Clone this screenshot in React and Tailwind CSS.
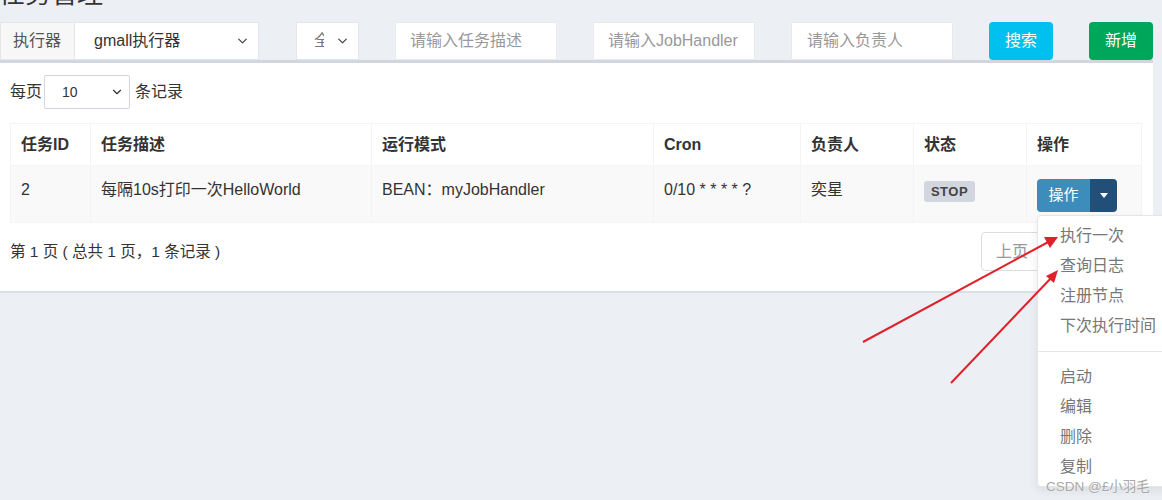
import React from "react";
import { ChevronDown } from "lucide-react";

const FONT = { fontFamily: '"Liberation Sans", "Noto Sans CJK SC", sans-serif' };

function Select({ width, children }) {
  return (
    <div className={`relative flex items-center h-full bg-white border border-[#e3e6ea] ${width}`}>
      {children}
      <ChevronDown className="absolute right-[8px] top-1/2 -translate-y-1/2 text-[#444]" size={15} strokeWidth={2} />
    </div>
  );
}

const cols = [
  { t: "任务ID", w: "w-[80px]" },
  { t: "任务描述", w: "w-[281px]" },
  { t: "运行模式", w: "w-[282px]" },
  { t: "Cron", w: "w-[147px]" },
  { t: "负责人", w: "w-[113px]" },
  { t: "状态", w: "w-[113px]" },
  { t: "操作", w: "w-[115px]" },
];

export default function App() {
  return (
    <div className="relative w-[1162px] h-[500px] overflow-hidden bg-[#ecf0f5] text-[#333]" style={FONT}>
      <h1 className="text-[26px] leading-[26px] -mt-[19px] -ml-[1px] text-[#333]">任务管理</h1>

      {/* filter row */}
      <div className="mt-[15px] flex h-[38px] gap-9 text-[16px]">
        <div className="flex h-full w-[260px]">
          <div className="flex items-center h-full w-[75px] bg-[#f7f7f7] border border-[#e3e6ea] pl-[12px] text-[#555]">执行器</div>
          <Select width="w-[185px] -ml-px">
            <span className="pl-[19px]">gmall执行器</span>
          </Select>
        </div>
        <Select width="w-[63px]">
          <span className="ml-[17px] w-[10px] overflow-hidden whitespace-nowrap text-[#777]">全部</span>
        </Select>
        <div className="flex items-center w-[162px] h-full bg-white border border-[#e8eaed] pl-[14px] text-[#999]">请输入任务描述</div>
        <div className="flex items-center w-[162px] h-full bg-white border border-[#e8eaed] pl-[14px] text-[#999]">请输入JobHandler</div>
        <div className="flex items-center w-[162px] h-full bg-white border border-[#e8eaed] pl-[15px] text-[#999]">请输入负责人</div>
        <div className="flex items-center justify-center w-[64px] h-full rounded-[4px] bg-[#00c0ef] text-white">搜索</div>
        <div className="flex items-center justify-center w-[64px] h-full rounded-[4px] bg-[#00a65a] text-white">新增</div>
      </div>

      {/* box */}
      <div className="w-[1153px] bg-white border-t-[3px] border-[#d2d6de] shadow-[0_2px_0_#dadfe3] px-[10px] pt-[12px] pb-[20px] text-[16px]">
        <div className="flex items-center h-[34px]">
          <span>每页</span>
          <div className="relative flex items-center w-[86px] h-full ml-[2px] border border-[#d2d6de] rounded-[2px] bg-white">
            <span className="pl-[17px] text-[14px]">10</span>
            <ChevronDown className="absolute right-[5px] top-1/2 -translate-y-1/2 text-[#333]" size={14} strokeWidth={2} />
          </div>
          <span className="ml-[5px]">条记录</span>
        </div>

        <table className="mt-[14px] w-[1131px] table-fixed border-collapse">
          <thead>
            <tr className="h-[42px] bg-white">
              {cols.map((c) => (
                <th key={c.t} className={`${c.w} border border-[#f4f4f4] px-[10px] text-left font-bold align-middle`}>{c.t}</th>
              ))}
            </tr>
          </thead>
          <tbody>
            <tr className="h-[57px] bg-[#f9f9f9] align-top">
              <td className="border border-[#f4f4f4] px-[10px] pt-[12px] leading-[24px]">2</td>
              <td className="border border-[#f4f4f4] px-[10px] pt-[12px] leading-[24px]">每隔10s打印一次HelloWorld</td>
              <td className="border border-[#f4f4f4] px-[10px] pt-[12px] leading-[24px]">BEAN：myJobHandler</td>
              <td className="border border-[#f4f4f4] px-[10px] pt-[12px] leading-[24px]">0/10 * * * * ?</td>
              <td className="border border-[#f4f4f4] px-[10px] pt-[12px] leading-[24px]">奕星</td>
              <td className="border border-[#f4f4f4] px-[10px] pt-[13px]">
                <span className="inline-flex items-center justify-center w-[51px] h-[21px] rounded-[3px] bg-[#d2d6de] text-[13px] font-bold text-[#444] tracking-[0.5px]">STOP</span>
              </td>
              <td className="border border-[#f4f4f4] px-[10px] pt-[13px]">
                <div className="flex h-[33px] w-[80px]">
                  <div className="flex items-center justify-center w-[53px] h-full rounded-l-[4px] bg-[#3c8dbc] text-white text-[15px]">操作</div>
                  <div className="flex items-center justify-center w-[27px] h-full rounded-r-[4px] bg-[#214f78]">
                    <span className="block w-0 h-0 border-l-[4px] border-r-[4px] border-t-[5px] border-l-transparent border-r-transparent border-t-white" />
                  </div>
                </div>
              </td>
            </tr>
          </tbody>
        </table>

        <div className="mt-[9px] flex items-center justify-between h-[39px] w-[1131px]">
          <span className="text-[15.5px]">第 1 页 ( 总共 1 页，1 条记录 )</span>
          <div className="flex h-full">
            <div className="flex items-center justify-start pl-[14px] w-[160px] h-full border border-[#ddd] rounded-[4px] text-[#999]">上页</div>
          </div>
        </div>
      </div>

      {/* dropdown menu */}
      <div className="absolute left-[1037px] top-[215px] w-[170px] h-[272px] bg-white border border-[#e6e6e6] rounded-[4px] shadow-[0_4px_10px_rgba(0,0,0,0.08)] pt-[5px] text-[16px] text-[#777]">
        {["执行一次", "查询日志", "注册节点", "下次执行时间"].map((t) => (
          <div key={t} className="h-[30px] leading-[30px] pl-[22px] whitespace-nowrap">{t}</div>
        ))}
        <div className="my-[10px] h-px bg-[#e5e5e5]" />
        {["启动", "编辑", "删除", "复制"].map((t) => (
          <div key={t} className="h-[30px] leading-[30px] pl-[22px] whitespace-nowrap">{t}</div>
        ))}
      </div>

      {/* watermark */}
      <div className="absolute left-[1046px] top-[478px] text-[13.5px] leading-[18px] text-[#a8a8a8] whitespace-nowrap [text-shadow:0_0_2px_#fff]">CSDN @£小羽毛</div>

      {/* red arrows */}
      <svg className="absolute left-0 top-0 pointer-events-none" width="1162" height="500" viewBox="0 0 1162 500">
        <line x1="863" y1="342" x2="1052" y2="240" stroke="#e0202a" strokeWidth="2" />
        <path d="M1058,237 L1044,237 L1050,248 Z" fill="#e0202a" />
        <line x1="951" y1="383" x2="1053" y2="276" stroke="#e0202a" strokeWidth="2" />
        <path d="M1058,270 L1046,276 L1054,283 Z" fill="#e0202a" />
      </svg>
    </div>
  );
}
